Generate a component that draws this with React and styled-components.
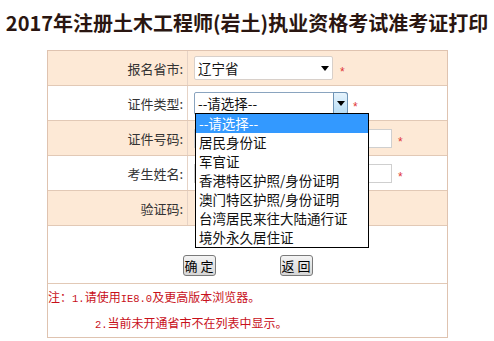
import React from "react";
import styled, { createGlobalStyle } from "styled-components";

const Global = createGlobalStyle`
  html, body { margin: 0; padding: 0; background: #fff; }
  body { font-family: "Noto Sans CJK SC", "Noto Sans", sans-serif; color: #222; }
`;

const Page = styled.div`
  width: 494px;
  height: 341px;
  overflow: hidden;
`;

const Title = styled.h1`
  margin: 0;
  height: 50px;
  line-height: 46px;
  text-align: center;
  font-size: 20px;
  font-weight: 700;
  color: #2a1611;
  white-space: nowrap;
`;

const FormTable = styled.div`
  width: 401px;
  box-sizing: border-box;
  margin-left: 47px;
  border: 1px solid #dfc3b0;
`;

const Row = styled.div`
  display: grid;
  grid-template-columns: 140px 1fr;
  height: 35px;
  box-sizing: border-box;
  border-bottom: 1px solid #e2c9b6;
  background: ${(p) => (p.$shade ? "#fde9d6" : "#fff")};
`;

const LabelCell = styled.div`
  display: flex;
  align-items: center;
  justify-content: flex-end;
  padding-right: 4px;
  border-right: 1px solid #e6d3c6;
  font-size: 13px;
  color: #333;
`;

const FieldCell = styled.div`
  position: relative;
  display: flex;
  align-items: center;
  padding-left: 6px;
`;

const SelectBox = styled.div`
  position: relative;
  width: ${(p) => p.$width}px;
  height: ${(p) => p.$height}px;
  box-sizing: border-box;
  background: #fff;
  border: 1px solid ${(p) => (p.$focused ? "#8aa4bf" : "#d8d0ca")};
  border-radius: 2px;
  display: flex;
  align-items: center;
  padding-left: 3px;
  font-size: 13.5px;
  color: #111;
`;

const Triangle = styled.span`
  position: absolute;
  right: ${(p) => p.$right}px;
  top: 50%;
  margin-top: -2px;
  width: 0;
  height: 0;
  border-left: 4px solid transparent;
  border-right: 4px solid transparent;
  border-top: 5px solid #000;
`;

const ArrowButton = styled.span`
  position: absolute;
  right: -1px;
  top: -1px;
  bottom: -1px;
  width: 15px;
  box-sizing: border-box;
  border: 1px solid #6e93b5;
  border-radius: 0 3px 3px 0;
  background: linear-gradient(#e6f3fc, #b6dcf5);
  display: flex;
  align-items: center;
  justify-content: center;
  &::after {
    content: "";
    width: 0;
    height: 0;
    border-left: 4px solid transparent;
    border-right: 4px solid transparent;
    border-top: 5px solid #000;
  }
`;

const TextInput = styled.div`
  width: 198px;
  height: 19px;
  box-sizing: border-box;
  background: #fff;
  border: 1px solid #cfcfcf;
`;

const Star = styled.span`
  margin-left: ${(p) => p.$gap}px;
  margin-top: 7px;
  font-family: "Liberation Sans", sans-serif;
  font-size: 12px;
  line-height: 1;
  color: #e03535;
`;

const DropList = styled.ul`
  position: absolute;
  left: 7px;
  top: 27px;
  z-index: 10;
  width: 174px;
  box-sizing: border-box;
  margin: 0;
  padding: 0;
  list-style: none;
  background: #fff;
  border: 1px solid #000;
`;

const DropItem = styled.li`
  height: 19px;
  line-height: 19px;
  padding-left: 3px;
  font-size: 13.5px;
  white-space: nowrap;
  color: ${(p) => (p.$active ? "#fff" : "#111")};
  background: ${(p) => (p.$active ? "#3399ff" : "transparent")};
`;

const ButtonRow = styled.div`
  height: 58px;
  box-sizing: border-box;
  padding-top: 29px;
  border-bottom: 1px solid #e2c9b6;
  display: flex;
  justify-content: center;
  gap: 64px;
`;

const Button = styled.button`
  width: 33px;
  height: 21px;
  padding: 0;
  box-sizing: border-box;
  border: 1px solid #7a7a7a;
  border-radius: 3px;
  background: linear-gradient(#f4f4f4, #d6d6d6);
  font-family: "Noto Sans CJK SC", sans-serif;
  font-size: 13px;
  line-height: 19px;
  color: #000;
`;

const Notes = styled.div`
  height: 53px;
  color: #c8101a;
  font-size: 12px;
`;

const NoteLine = styled.div`
  height: 26px;
  line-height: 26px;
  padding-left: ${(p) => p.$indent}px;
  white-space: nowrap;
`;

const Latin = styled.span`
  font-family: "Liberation Mono", monospace;
  font-size: 10.5px;
`;

const options = [
  "--请选择--",
  "居民身份证",
  "军官证",
  "香港特区护照/身份证明",
  "澳门特区护照/身份证明",
  "台湾居民来往大陆通行证",
  "境外永久居住证",
];

export default function App() {
  return (
    <Page>
      <Global />
      <Title>2017年注册土木工程师(岩土)执业资格考试准考证打印</Title>
      <FormTable>
        <Row $shade>
          <LabelCell>报名省市:</LabelCell>
          <FieldCell>
            <SelectBox $width={139} $height={24}>
              辽宁省
              <Triangle $right={3} />
            </SelectBox>
            <Star $gap={7}>*</Star>
          </FieldCell>
        </Row>
        <Row>
          <LabelCell>证件类型:</LabelCell>
          <FieldCell>
            <SelectBox $width={154} $height={23} $focused>
              --请选择--
              <ArrowButton />
            </SelectBox>
            <Star $gap={5}>*</Star>
            <DropList>
              {options.map((o, i) => (
                <DropItem key={o} $active={i === 0}>
                  {o}
                </DropItem>
              ))}
            </DropList>
          </FieldCell>
        </Row>
        <Row $shade>
          <LabelCell>证件号码:</LabelCell>
          <FieldCell>
            <TextInput />
            <Star $gap={6}>*</Star>
          </FieldCell>
        </Row>
        <Row>
          <LabelCell>考生姓名:</LabelCell>
          <FieldCell>
            <TextInput />
            <Star $gap={6}>*</Star>
          </FieldCell>
        </Row>
        <Row $shade>
          <LabelCell>验证码:</LabelCell>
          <FieldCell />
        </Row>
        <ButtonRow>
          <Button>确 定</Button>
          <Button>返 回</Button>
        </ButtonRow>
        <Notes>
          <NoteLine $indent={0}>
            注：<Latin>1.</Latin>请使用<Latin>IE8.0</Latin>及更高版本浏览器。
          </NoteLine>
          <NoteLine $indent={47}>
            <Latin>2.</Latin>当前未开通省市不在列表中显示。
          </NoteLine>
        </Notes>
      </FormTable>
    </Page>
  );
}
